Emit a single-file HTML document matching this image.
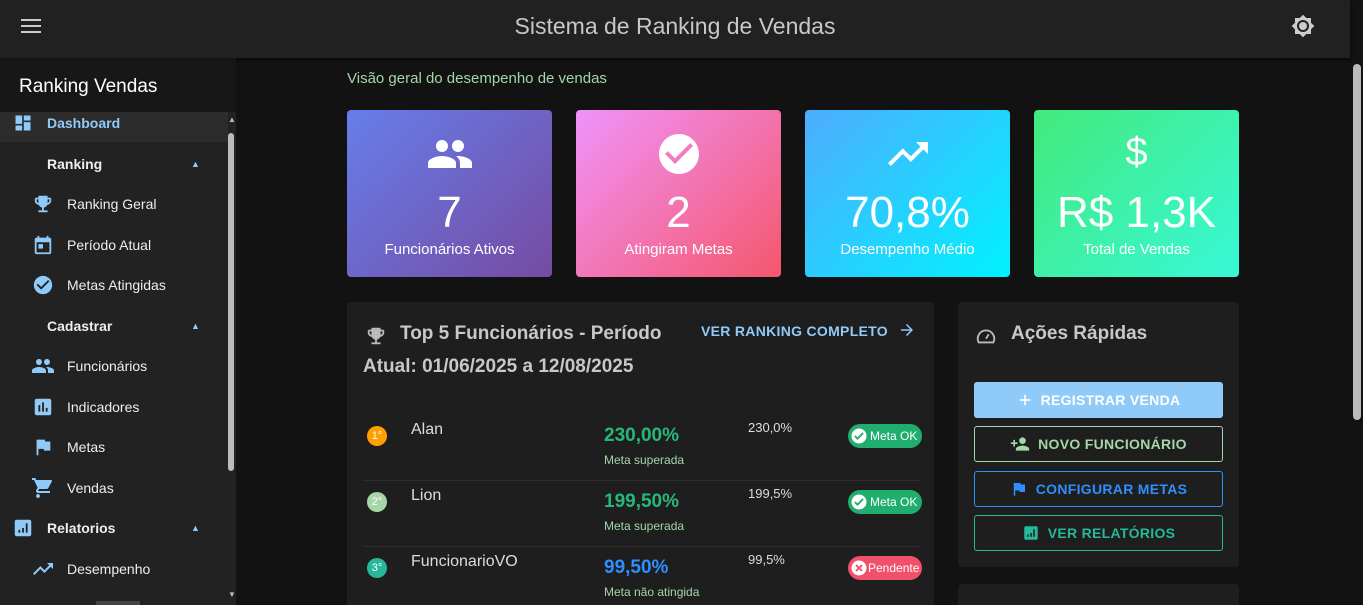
<!DOCTYPE html>
<html><head><meta charset="utf-8"><style>
*{box-sizing:border-box;margin:0;padding:0}
html,body{width:1363px;height:605px;overflow:hidden}
body{background:#121212;font-family:"Liberation Sans",sans-serif;position:relative;color:#ddd}
.top{position:absolute;left:0;top:0;width:1350px;height:58px;background:#212121;box-shadow:0 2px 4px rgba(0,0,0,.5)}
.top .t{position:absolute;left:0;right:0;top:13px;text-align:center;font-size:23px;color:#c8c8c8}
.side{position:absolute;left:0;top:58px;width:236px;height:547px;background:#222}
.side .hd{height:54px;background:#171717;font-size:19px;color:#fff;padding:18px 0 0 19px}
.it{position:absolute;left:0;width:228px;height:36px;font-size:14px;color:#eee;display:flex;align-items:center}
.it svg{position:absolute}
.it span{position:absolute}
.scroll{position:absolute;left:228px;width:6px;height:338px;background:#bbb;border-radius:3px}
.vs{position:absolute;left:1353px;top:64px;width:8px;height:356px;background:#bbb;border-radius:4px}
.card{position:absolute;top:110px;width:205px;height:167px;border-radius:4px;color:#fff;text-align:center}
.card .v{position:absolute;left:0;right:0;top:80px;font-size:44px;line-height:46px}
.card .l{position:absolute;left:0;right:0;top:131px;font-size:15px}
.card svg{position:absolute;left:50%;top:20px;transform:translateX(-50%)}
.panel{position:absolute;background:#1e1e1e;border-radius:4px}
.row{position:absolute;left:16px;width:558px;height:66px}
.badge{position:absolute;width:20px;height:20px;border-radius:50%;color:#fff;font-size:11px;text-align:center;line-height:20px;left:4px;top:8px}
.name{position:absolute;left:48px;top:3px;font-size:16px;color:#ddd}
.pct{position:absolute;left:241px;top:7px;font-size:19px;font-weight:bold}
.sub{position:absolute;left:241px;top:35px;font-size:12px;color:#a5d6a7}
.p2{position:absolute;left:385px;top:2px;font-size:13px;color:#ddd}
.chip{position:absolute;left:485px;top:6px;width:74px;height:24px;border-radius:12px;color:#fff;font-size:12px;line-height:24px;padding-left:22px}
.chip svg{position:absolute;left:2px;top:3px}
.btn{position:absolute;left:16px;width:249px;height:36px;border-radius:3px;font-size:14px;font-weight:bold;display:flex;align-items:center;justify-content:center;gap:8px;letter-spacing:.3px}
</style></head><body>
<div class="top">
<svg style="position:absolute;left:21px;top:18px" width="20" height="16"><rect y="1" width="20" height="2" fill="#ccc"/><rect y="7" width="20" height="2" fill="#ccc"/><rect y="13" width="20" height="2" fill="#ccc"/></svg>
<div class="t">Sistema de Ranking de Vendas</div>
<svg style="position:absolute;left:1291px;top:14px" width="24" height="24" viewBox="0 0 24 24"><path fill="#ccc" fill-rule="evenodd" d="M20 8.69V4h-4.69L12 .69 8.69 4H4v4.69L.69 12 4 15.31V20h4.69L12 23.31 15.31 20H20v-4.69L23.31 12z M12 18a6 6 0 1 1 0-12 6 6 0 0 1 0 12z"/><circle cx="12" cy="12" r="4" fill="#ccc"/></svg>
</div>
<div class="side">
<div class="hd">Ranking Vendas</div>
<div style="position:absolute;left:0;top:54px;width:228px;height:30px;background:#2c2c2c"></div>
<div class="scroll" style="top:75px"></div>
<div style="position:absolute;left:228px;top:57px;font-size:8px;color:#bbb">▲</div>
<div style="position:absolute;left:228px;top:532px;font-size:8px;color:#bbb">▼</div>
</div>
<div class="it" style="top:105px"><svg style="left:13px" width="20" height="20" viewBox="0 0 24 24"><path fill="#90caf9" d="M3 13h8V3H3v10zm0 8h8v-6H3v6zm10 0h8V11h-8v10zm0-18v6h8V3h-8z"/></svg><span style="left:47px;color:#90caf9;font-weight:bold">Dashboard</span></div>
<div class="it" style="top:146px"><span style="left:47px;font-weight:bold">Ranking</span><span style="left:191px;font-size:9px;color:#90caf9">▲</span></div>
<div class="it" style="top:186px"><svg style="left:32px" width="22" height="22" viewBox="0 0 24 24"><path fill="#90caf9" d="M19 5h-2V3H7v2H5c-1.1 0-2 .9-2 2v1c0 2.55 1.92 4.63 4.39 4.94A5.01 5.01 0 0 0 11 15.9V19H7v2h10v-2h-4v-3.1a5.01 5.01 0 0 0 3.61-2.96C19.08 12.63 21 10.55 21 8V7c0-1.1-.9-2-2-2zM5 8V7h2v3.82C5.84 10.4 5 9.3 5 8zm14 0c0 1.3-.84 2.4-2 2.82V7h2v1z"/></svg><span style="left:67px">Ranking Geral</span></div>
<div class="it" style="top:227px"><svg style="left:32px" width="22" height="22" viewBox="0 0 24 24"><path fill="#90caf9" d="M19 4h-1V2h-2v2H8V2H6v2H5c-1.1 0-2 .9-2 2v14c0 1.1.9 2 2 2h14c1.1 0 2-.9 2-2V6c0-1.1-.9-2-2-2zm0 16H5V9h14v11zM7 11h5v5H7z"/></svg><span style="left:67px">Período Atual</span></div>
<div class="it" style="top:267px"><svg style="left:32px" width="22" height="22" viewBox="0 0 24 24"><path fill="#90caf9" d="M12 2C6.48 2 2 6.48 2 12s4.48 10 10 10 10-4.48 10-10S17.52 2 12 2zm-2 15-5-5 1.41-1.41L10 14.17l7.59-7.59L19 8l-9 9z"/></svg><span style="left:67px">Metas Atingidas</span></div>
<div class="it" style="top:308px"><span style="left:47px;font-weight:bold">Cadastrar</span><span style="left:191px;font-size:9px;color:#90caf9">▲</span></div>
<div class="it" style="top:348px"><svg style="left:31px" width="24" height="24" viewBox="0 0 24 24"><path fill="#90caf9" d="M16 11c1.66 0 2.99-1.34 2.99-3S17.66 5 16 5c-1.66 0-3 1.34-3 3s1.34 3 3 3zm-8 0c1.66 0 2.99-1.34 2.99-3S9.66 5 8 5C6.34 5 5 6.34 5 8s1.34 3 3 3zm0 2c-2.33 0-7 1.17-7 3.5V19h14v-2.5c0-2.33-4.67-3.5-7-3.5zm8 0c-.29 0-.62.02-.97.05 1.16.84 1.97 1.97 1.97 3.45V19h6v-2.5c0-2.33-4.67-3.5-7-3.5z"/></svg><span style="left:67px">Funcionários</span></div>
<div class="it" style="top:389px"><svg style="left:32px" width="22" height="22" viewBox="0 0 24 24"><path fill="#90caf9" d="M19 3H5c-1.1 0-2 .9-2 2v14c0 1.1.9 2 2 2h14c1.1 0 2-.9 2-2V5c0-1.1-.9-2-2-2zM9 17H7v-7h2v7zm4 0h-2V7h2v10zm4 0h-2v-4h2v4z"/></svg><span style="left:67px">Indicadores</span></div>
<div class="it" style="top:429px"><svg style="left:32px" width="22" height="22" viewBox="0 0 24 24"><path fill="#90caf9" d="M14.4 6 14 4H5v17h2v-7h5.6l.4 2h7V6z"/></svg><span style="left:67px">Metas</span></div>
<div class="it" style="top:470px"><svg style="left:31px" width="24" height="24" viewBox="0 0 24 24"><path fill="#90caf9" d="M7 18c-1.1 0-1.99.9-1.99 2S5.9 22 7 22s2-.9 2-2-.9-2-2-2zM1 2v2h2l3.6 7.59-1.35 2.45c-.16.28-.25.61-.25.96 0 1.1.9 2 2 2h12v-2H7.42c-.14 0-.25-.11-.25-.25l.03-.12.9-1.63h7.45c.75 0 1.41-.41 1.75-1.03l3.58-6.49A1 1 0 0 0 20 4H5.21l-.94-2H1z"/></svg><span style="left:67px">Vendas</span></div>
<div class="it" style="top:510px"><svg style="left:12px" width="22" height="22" viewBox="0 0 24 24"><path fill="#90caf9" d="M19 3H5c-1.1 0-2 .9-2 2v14c0 1.1.9 2 2 2h14c1.1 0 2-.9 2-2V5c0-1.1-.9-2-2-2zM9 17H7v-3h2v3zm4 0h-2v-5h2v5zm4 0h-2V7h2v10z"/></svg><span style="left:47px;font-weight:bold">Relatorios</span><span style="left:191px;font-size:9px;color:#90caf9">▲</span></div>
<div class="it" style="top:551px"><svg style="left:31px" width="24" height="24" viewBox="0 0 24 24"><path fill="#90caf9" d="m16 6 2.29 2.29-4.88 4.88-4-4L2 16.59 3.41 18l6-6 4 4 6.3-6.29L22 12V6z"/></svg><span style="left:67px">Desempenho</span></div>
<div style="position:absolute;left:96px;top:601px;width:44px;height:4px;background:#444"></div>

<div class="vs"></div>
<div style="position:absolute;left:347px;top:70px;font-size:15px;color:#a5d6a7">Visão geral do desempenho de vendas</div>

<div class="card" style="left:347px;background:linear-gradient(135deg,#667eea,#764ba2)">
<svg width="48" height="48" viewBox="0 0 24 24"><path fill="#fff" d="M16 11c1.66 0 2.99-1.34 2.99-3S17.66 5 16 5c-1.66 0-3 1.34-3 3s1.34 3 3 3zm-8 0c1.66 0 2.99-1.34 2.99-3S9.66 5 8 5C6.34 5 5 6.34 5 8s1.34 3 3 3zm0 2c-2.33 0-7 1.17-7 3.5V19h14v-2.5c0-2.33-4.67-3.5-7-3.5zm8 0c-.29 0-.62.02-.97.05 1.16.84 1.97 1.97 1.97 3.45V19h6v-2.5c0-2.33-4.670-3.5-7-3.5z"/></svg>
<div class="v">7</div><div class="l">Funcionários Ativos</div></div>
<div class="card" style="left:576px;background:linear-gradient(135deg,#f093fb,#f5576c)">
<svg width="48" height="48" viewBox="0 0 24 24"><path fill="#fff" d="M12 2C6.48 2 2 6.48 2 12s4.48 10 10 10 10-4.48 10-10S17.52 2 12 2zm-2 15-5-5 1.41-1.41L10 14.17l7.59-7.59L19 8l-9 9z"/></svg>
<div class="v">2</div><div class="l">Atingiram Metas</div></div>
<div class="card" style="left:805px;background:linear-gradient(135deg,#4facfe,#00f2fe)">
<svg width="48" height="48" viewBox="0 0 24 24"><path fill="#fff" d="m16 6 2.29 2.29-4.88 4.88-4-4L2 16.59 3.41 18l6-6 4 4 6.3-6.29L22 12V6z"/></svg>
<div class="v">70,8%</div><div class="l">Desempenho Médio</div></div>
<div class="card" style="left:1034px;background:linear-gradient(135deg,#43e97b,#38f9d7)">
<div style="position:absolute;left:0;right:0;top:20px;font-size:40px;line-height:44px">$</div>
<div class="v">R$ 1,3K</div><div class="l">Total de Vendas</div></div>

<div class="panel" style="left:347px;top:302px;width:587px;height:310px">
<svg style="position:absolute;left:18px;top:23px" width="22" height="22" viewBox="0 0 24 24"><path fill="#bbb" d="M19 5h-2V3H7v2H5c-1.1 0-2 .9-2 2v1c0 2.55 1.92 4.63 4.39 4.94A5.01 5.01 0 0 0 11 15.9V19H7v2h10v-2h-4v-3.1a5.01 5.01 0 0 0 3.61-2.96C19.08 12.63 21 10.55 21 8V7c0-1.1-.9-2-2-2zM5 8V7h2v3.82C5.84 10.4 5 9.3 5 8zm14 0c0 1.3-.84 2.4-2 2.82V7h2v1z"/></svg>
<div style="position:absolute;left:53px;top:21px;font-size:19px;font-weight:bold;color:#c8c8c8">Top 5 Funcionários - Período</div>
<div style="position:absolute;left:16px;top:54px;font-size:19px;font-weight:bold;color:#c8c8c8">Atual: 01/06/2025 a 12/08/2025</div>
<div style="position:absolute;left:354px;top:21px;font-size:14px;font-weight:bold;color:#90caf9;letter-spacing:.3px">VER RANKING COMPLETO</div>
<svg style="position:absolute;left:551px;top:19px" width="18" height="18" viewBox="0 0 24 24"><path fill="#90caf9" d="m12 4-1.41 1.41L16.17 11H4v2h12.17l-5.58 5.59L12 20l8-8z"/></svg>
<div class="row" style="top:116px"><div class="badge" style="background:#ffa000">1°</div><div class="name">Alan</div><div class="pct" style="color:#26b87a">230,00%</div><div class="sub">Meta superada</div><div class="p2">230,0%</div><div class="chip" style="background:#1fae6e"><svg width="18" height="18" viewBox="0 0 24 24"><circle cx="12" cy="12" r="10" fill="#fff"/><path d="m6.5 12 3.5 3.5 7.5-7.5" stroke="#1fae6e" stroke-width="2.5" fill="none"/></svg>Meta OK</div></div>
<div style="position:absolute;left:16px;top:178px;width:558px;height:1px;background:#2c2c2c"></div>
<div class="row" style="top:182px"><div class="badge" style="background:#a5d6a7">2°</div><div class="name">Lion</div><div class="pct" style="color:#26b87a">199,50%</div><div class="sub">Meta superada</div><div class="p2">199,5%</div><div class="chip" style="background:#1fae6e"><svg width="18" height="18" viewBox="0 0 24 24"><circle cx="12" cy="12" r="10" fill="#fff"/><path d="m6.5 12 3.5 3.5 7.5-7.5" stroke="#1fae6e" stroke-width="2.5" fill="none"/></svg>Meta OK</div></div>
<div style="position:absolute;left:16px;top:244px;width:558px;height:1px;background:#2c2c2c"></div>
<div class="row" style="top:248px"><div class="badge" style="background:#26b89a">3°</div><div class="name">FuncionarioVO</div><div class="pct" style="color:#2e8fff">99,50%</div><div class="sub">Meta não atingida</div><div class="p2">99,5%</div><div class="chip" style="background:#f0506a;padding-left:20px"><svg width="18" height="18" viewBox="0 0 24 24"><circle cx="12" cy="12" r="10" fill="#fff"/><path d="m8 8 8 8m0-8-8 8" stroke="#f0506a" stroke-width="2.5"/></svg>Pendente</div></div>
</div>

<div class="panel" style="left:958px;top:302px;width:281px;height:265px">
<svg style="position:absolute;left:17px;top:23px" width="22" height="22" viewBox="0 0 24 24"><path fill="none" stroke="#bbb" stroke-width="2" d="M4 19a9 9 0 1 1 16 0z"/><path stroke="#bbb" stroke-width="2" d="m12 15 3-5"/></svg>
<div style="position:absolute;left:53px;top:21px;font-size:19px;font-weight:bold;color:#c8c8c8">Ações Rápidas</div>
<div class="btn" style="top:80px;background:#90caf9;color:#fff"><svg width="16" height="16" viewBox="0 0 24 24"><path d="M12 4v16M4 12h16" stroke="#fff" stroke-width="2.5"/></svg>REGISTRAR VENDA</div>
<div class="btn" style="top:124px;border:1px solid #a5d6a7;color:#a5d6a7"><svg width="20" height="20" viewBox="0 0 24 24"><path fill="#a5d6a7" d="M15 12c2.21 0 4-1.79 4-4s-1.79-4-4-4-4 1.79-4 4 1.79 4 4 4zm-9-2V7H4v3H1v2h3v3h2v-3h3v-2H6zm9 4c-2.67 0-8 1.34-8 4v2h16v-2c0-2.66-5.33-4-8-4z"/></svg>NOVO FUNCIONÁRIO</div>
<div class="btn" style="top:169px;border:1px solid #2e8fff;color:#2e8fff"><svg width="18" height="18" viewBox="0 0 24 24"><path fill="#2e8fff" d="M14.4 6 14 4H5v17h2v-7h5.6l.4 2h7V6z"/></svg>CONFIGURAR METAS</div>
<div class="btn" style="top:213px;border:1px solid #26b89a;color:#26b89a"><svg width="18" height="18" viewBox="0 0 24 24"><path fill="#26b89a" d="M19 3H5c-1.1 0-2 .9-2 2v14c0 1.1.9 2 2 2h14c1.1 0 2-.9 2-2V5c0-1.1-.9-2-2-2zM9 17H7v-3h2v3zm4 0h-2v-5h2v5zm4 0h-2V7h2v10z"/></svg>VER RELATÓRIOS</div>
</div>
<div class="panel" style="left:958px;top:584px;width:281px;height:40px"></div>
</body></html>
